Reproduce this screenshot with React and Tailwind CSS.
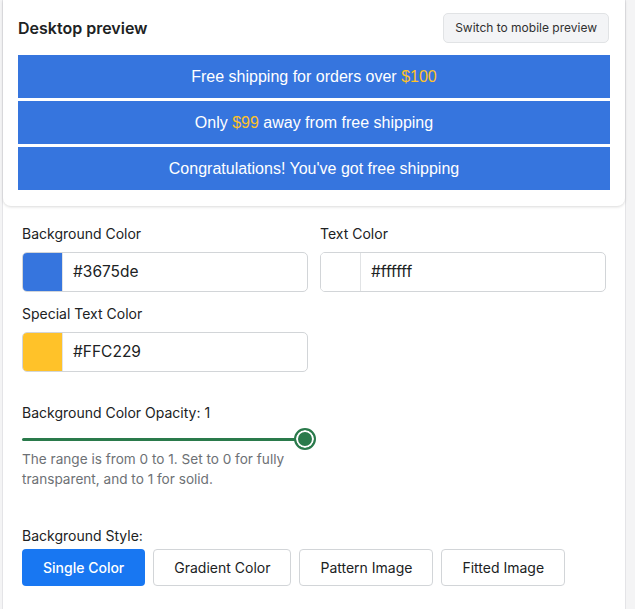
import React, { useState } from 'react';

const banners = [
  { before: 'Free shipping for orders over ', special: '$100', after: '' },
  { before: 'Only ', special: '$99', after: ' away from free shipping' },
  { before: "Congratulations! You've got free shipping", special: '', after: '' },
];

const styles = ['Single Color', 'Gradient Color', 'Pattern Image', 'Fitted Image'];

function ColorField({ label, color, value }) {
  return (
    <div className="flex flex-col">
      <div className="h-[20px] text-[14px] text-[#202223] leading-[20px]">{label}</div>
      <div className="mt-[8px] flex h-[40px] w-[286px] rounded-[5px] border border-[#d2d5d8] overflow-hidden bg-white">
        <div className="w-[40px] h-full border-r border-[#e1e3e5]" style={{ backgroundColor: color }} />
        <div className="flex items-center pl-[10px] text-[15.5px] text-[#202223]">{value}</div>
      </div>
    </div>
  );
}

export default function App() {
  const [active, setActive] = useState('Single Color');

  return (
    <div className="w-[635px] h-[609px] bg-[#f4f4f5] overflow-hidden" style={{ fontFamily: 'Inter, "Liberation Sans", sans-serif' }}>
      <div className="ml-[2px] w-[624px] h-full bg-white border-l border-r border-[#e4e4e7]">
        {/* preview card */}
        <div className="h-[206px] rounded-b-[8px] bg-white shadow-[0_1px_3px_rgba(0,0,0,0.15)] px-[15px] pt-[13px]">
          <div className="flex items-center justify-between h-[30px] pr-[1px]">
            <h2 className="text-[16px] font-semibold text-[#202223]">Desktop preview</h2>
            <button className="h-[30px] px-[11px] rounded-[5px] border border-[#e1e3e5] bg-[#f3f4f6] text-[12px] text-[#303030]">
              Switch to mobile preview
            </button>
          </div>
          <div className="mt-[12px] flex flex-col gap-[3px] w-[592px]">
            {banners.map((b, i) => (
              <div
                key={i}
                className="h-[43px] bg-[#3675de] flex items-center justify-center text-white text-[16px]"
                style={{ fontFamily: '"Liberation Sans", Arial, sans-serif' }}
              >
                <span className="whitespace-pre">
                  {b.before}
                  {b.special && <span className="text-[#FFC229]">{b.special}</span>}
                  {b.after}
                </span>
              </div>
            ))}
          </div>
        </div>

        {/* settings */}
        <div className="pl-[19px] pt-[18px]">
          <div className="flex gap-[12px]">
            <ColorField label="Background Color" color="#3675de" value="#3675de" />
            <ColorField label="Text Color" color="#ffffff" value="#ffffff" />
          </div>
          <div className="mt-[12px]">
            <ColorField label="Special Text Color" color="#FFC229" value="#FFC229" />
          </div>

          <div className="mt-[31px] text-[14px] text-[#202223] leading-[20px]">Background Color Opacity: 1</div>
          <div className="relative mt-[6px] w-[296px] h-[20px]">
            <div className="absolute left-0 top-[9px] w-[282px] h-[3px] rounded-full bg-[#2a7a4b]" />
            <div className="absolute left-[272px] top-[-1px] w-[22px] h-[22px] rounded-full bg-[#2a7a4b] border-[2px] border-[#2a7a4b] shadow-[inset_0_0_0_2px_#ffffff]" />
          </div>
          <p className="mt-0 w-[300px] text-[13.6px] leading-[20px] text-[#6d7175]">
            The range is from 0 to 1. Set to 0 for fully transparent, and to 1 for solid.
          </p>

          <div className="mt-[37px] text-[14px] text-[#202223] leading-[20px]">Background Style:</div>
          <div className="mt-[3px] flex gap-[8px]">
            {styles.map((s) =>
              s === active ? (
                <button
                  key={s}
                  onClick={() => setActive(s)}
                  className="h-[37px] px-[21px] rounded-[4px] bg-[#1877f2] text-white text-[14px] font-medium"
                >
                  {s}
                </button>
              ) : (
                <button
                  key={s}
                  onClick={() => setActive(s)}
                  className="h-[37px] px-[20px] rounded-[4px] border border-[#d2d5d8] bg-white text-[#202223] text-[14px]"
                >
                  {s}
                </button>
              )
            )}
          </div>
        </div>
      </div>
    </div>
  );
}
